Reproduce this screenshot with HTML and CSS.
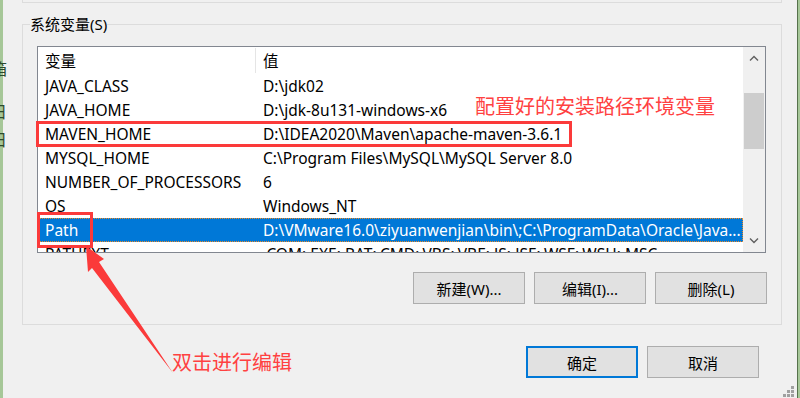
FILE: index.html
```html
<!DOCTYPE html>
<html>
<head>
  <title>系统变量</title>
  <meta charset=utf-8>
  <meta name=viewport content="width=device-width, initial-scale=1">
  <link rel="stylesheet" href="styles.css">
</head>
<body>
<div class="dialog">
  <div class="prevGroup"></div>

  <div class="group">
    <span class="legend">系统变量(S)</span>
    <div class="list">
      <div class="table">
        <div class="head">
          <div class="c1">变量</div>
          <div class="c2">值</div>
        </div>
        <div class="row"><div class="c1">JAVA_CLASS</div><div class="c2">D:\jdk02</div></div>
        <div class="row"><div class="c1">JAVA_HOME</div><div class="c2">D:\jdk-8u131-windows-x6</div></div>
        <div class="row"><div class="c1">MAVEN_HOME</div><div class="c2">D:\IDEA2020\Maven\apache-maven-3.6.1</div></div>
        <div class="row"><div class="c1">MYSQL_HOME</div><div class="c2">C:\Program Files\MySQL\MySQL Server 8.0</div></div>
        <div class="row"><div class="c1">NUMBER_OF_PROCESSORS</div><div class="c2">6</div></div>
        <div class="row"><div class="c1">OS</div><div class="c2">Windows_NT</div></div>
        <div class="row selected"><div class="c1">Path</div><div class="c2">D:\VMware16.0\ziyuanwenjian\bin\;C:\ProgramData\Oracle\Java...</div></div>
        <div class="row"><div class="c1">PATHEXT</div><div class="c2">.COM;.EXE;.BAT;.CMD;.VBS;.VBE;.JS;.JSE;.WSF;.WSH;.MSC</div></div>
      </div>
      <div class="scrollbar">
        <div class="arrow">
          <svg width="10" height="6" viewBox="0 0 10 6"><path d="M1 5.5 L5 1.5 L9 5.5" fill="none" stroke="#606060" stroke-width="1.4"/></svg>
        </div>
        <div class="track"><div class="thumb"></div></div>
        <div class="arrow">
          <svg width="10" height="6" viewBox="0 0 10 6"><path d="M1 0.5 L5 4.5 L9 0.5" fill="none" stroke="#606060" stroke-width="1.4"/></svg>
        </div>
      </div>
    </div>
    <div class="buttons">
      <button class="btn">新建(W)...</button>
      <button class="btn">编辑(I)...</button>
      <button class="btn">删除(L)</button>
    </div>
  </div>

  <div class="actions">
    <button class="btn primary">确定</button>
    <button class="btn">取消</button>
  </div>
</div>

<!-- 背后窗口露出的字 -->
<span class="behind b1">箱</span>
<span class="behind b2">日</span>
<span class="behind b3">日</span>

<!-- 标注 -->
<div class="mark mark1"></div>
<div class="mark mark2"></div>
<div class="note note1">配置好的安装路径环境变量</div>
<div class="note note2">双击进行编辑</div>
<svg class="pointer" width="800" height="398" viewBox="0 0 800 398">
  <polygon points="86,246 104,259 99,262 173,373 92,268 88,272" fill="#fb3a3a"/>
</svg>

<div class="grip">
  <i style="left:8px;top:0"></i>
  <i style="left:4px;top:4px"></i><i style="left:8px;top:4px"></i>
  <i style="left:0;top:8px"></i><i style="left:4px;top:8px"></i><i style="left:8px;top:8px"></i>
</div>
</body>
</html>
```

FILE: styles.css
```css
html {
  padding: 0;
  margin: 0;
}
body {
  position: relative;
  width: 800px;
  height: 398px;
  margin: 0;
  overflow: hidden;
  background-color: #a6c798;
  font-family: "Noto Sans", "Noto Sans CJK SC", sans-serif;
  font-size: 15px;
  color: #000;
}
.dialog {
  box-sizing: border-box;
  width: 794px;
  height: 398px;
  margin-left: 3px;
  background-color: #f0f0f0;
  box-shadow: 1px 0 0 #56714c;
}
.prevGroup {
  box-sizing: border-box;
  width: 760px;
  height: 3px;
  margin-left: 19px;
  border: 1px solid #dcdcdc;
  border-top: 0;
}
.group {
  position: relative;
  box-sizing: border-box;
  width: 760px;
  margin: 21px 0 0 19px;
  padding: 21px 14px 20px 14px;
  border: 1px solid #dcdcdc;
}
.legend {
  position: absolute;
  top: -11px;
  left: 7px;
  line-height: 20px;
  background-color: #f0f0f0;
}
.list {
  display: flex;
  box-sizing: border-box;
  width: 729px;
  height: 207px;
  border: 1px solid #828790;
  background-color: #fff;
  font-size: 15.5px;
}
.table {
  width: 705px;
  overflow: hidden;
}
.head, .row {
  display: flex;
  white-space: nowrap;
}
.head {
  height: 27px;
  line-height: 29px;
}
.head .c1 {
  border-right: 1px solid #e5e5e5;
  margin: 1px 0;
  line-height: 27px;
}
.row {
  height: 24px;
  line-height: 24px;
}
.c1 {
  box-sizing: border-box;
  width: 218px;
  padding-left: 7px;
}
.c2 {
  flex: 1;
  padding-left: 7px;
  overflow: hidden;
}
.selected {
  background-color: #0078d7;
  color: #fff;
  outline: 1px dotted #f08a24;
  outline-offset: -1px;
}
.scrollbar {
  display: flex;
  flex-direction: column;
  width: 22px;
  background-color: #f0f0f0;
}
.arrow {
  display: flex;
  align-items: center;
  justify-content: center;
  height: 22px;
}
.track {
  flex: 1;
  padding: 24px 1px 0 1px;
}
.thumb {
  height: 56px;
  background-color: #cdcdcd;
}
.buttons, .actions {
  display: flex;
  justify-content: flex-end;
  gap: 9px;
}
.buttons {
  margin-top: 19px;
}
.actions {
  margin-top: 21px;
  padding-right: 38px;
}
.btn {
  box-sizing: border-box;
  width: 112px;
  height: 32px;
  padding: 0;
  border: 1px solid #adadad;
  background-color: #e1e1e1;
  font-family: "Noto Sans", "Noto Sans CJK SC", sans-serif;
  font-size: 15px;
  color: #000;
}
.primary {
  border: 2px solid #0078d7;
}
.behind {
  position: absolute;
  left: -9px;
  color: #2c4a2c;
  font-family: "Noto Sans CJK SC", sans-serif;
  font-size: 16px;
  line-height: 18px;
}
.b1 { top: 59px; }
.b2 { top: 102px; }
.b3 { top: 130px; }
.mark {
  position: absolute;
  box-sizing: border-box;
  border: 3px solid #fb3a3a;
}
.mark1 {
  left: 36px;
  top: 121px;
  width: 536px;
  height: 26px;
}
.mark2 {
  left: 37px;
  top: 212px;
  width: 56px;
  height: 36px;
}
.note {
  position: absolute;
  color: #ff4141;
  font-family: "Noto Sans CJK SC", sans-serif;
  font-size: 20px;
  line-height: 24px;
  white-space: nowrap;
}
.note1 {
  left: 475px;
  top: 94px;
}
.note2 {
  left: 172px;
  top: 350px;
}
.pointer {
  position: absolute;
  left: 0;
  top: 0;
}
.grip {
  position: absolute;
  right: 6px;
  bottom: 1px;
  width: 11px;
  height: 11px;
}
.grip i {
  position: absolute;
  width: 3px;
  height: 3px;
  background-color: #a0a0a0;
}
```
